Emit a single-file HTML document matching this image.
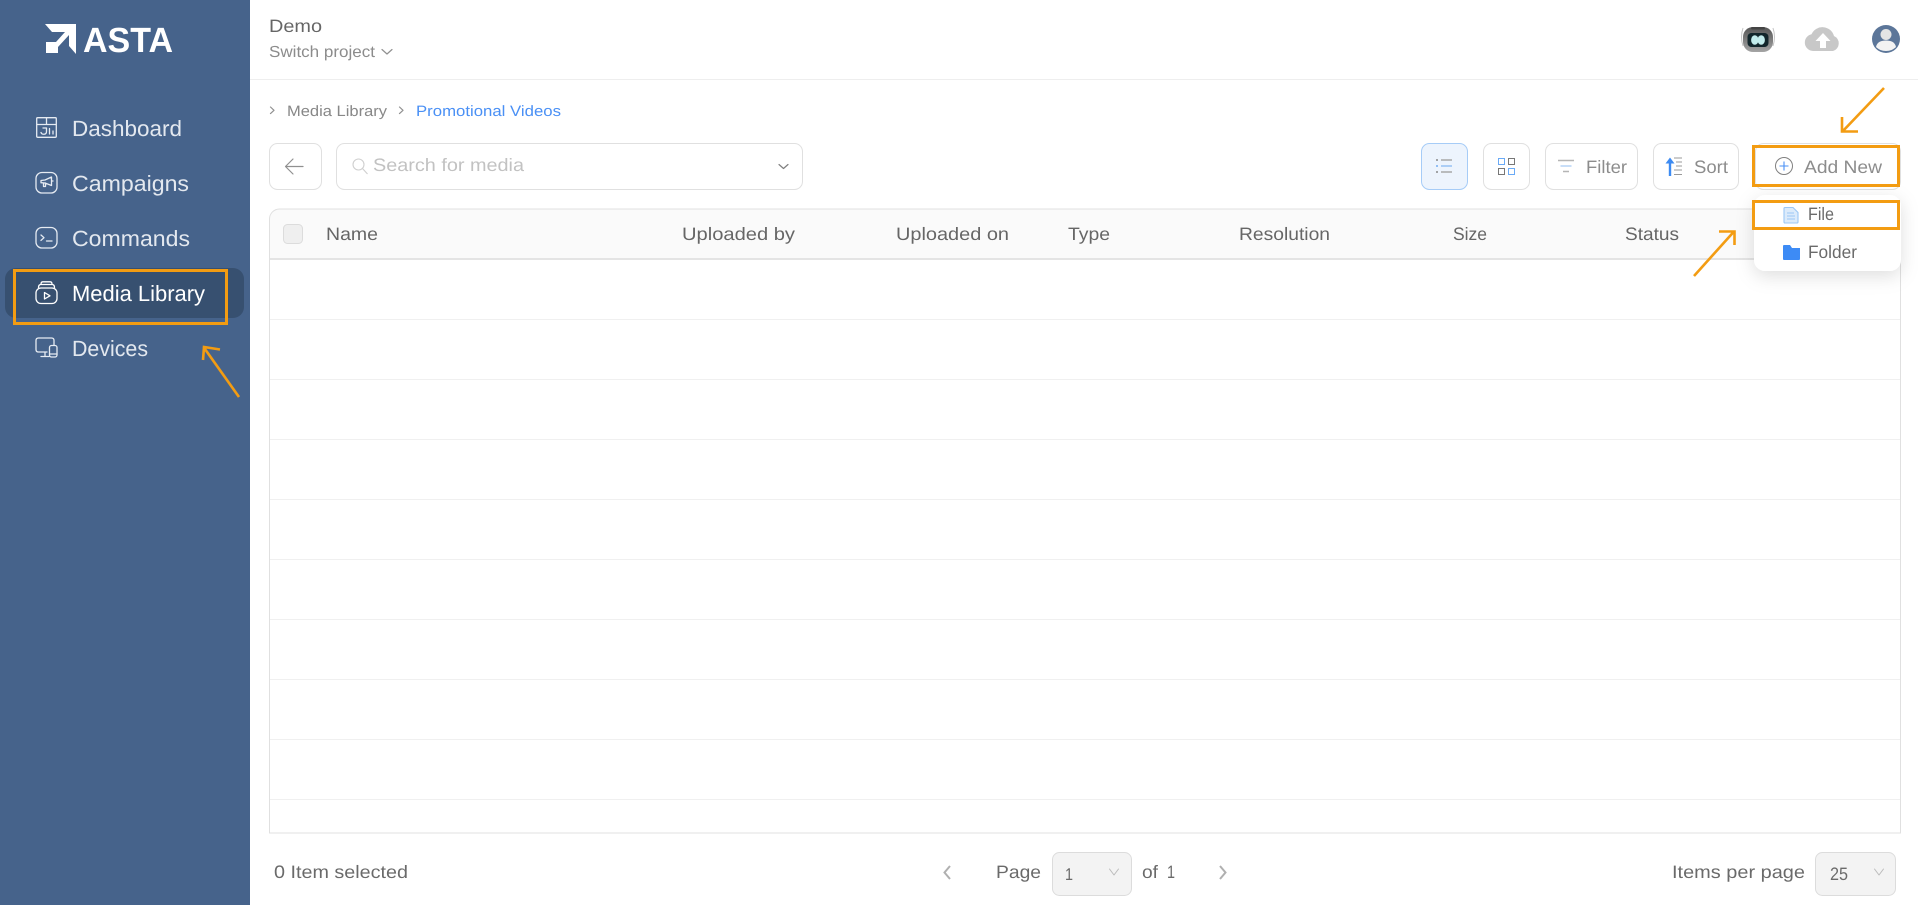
<!DOCTYPE html>
<html lang="en">
<head>
<meta charset="utf-8">
<title>ASTA - Media Library</title>
<style>
html,body{margin:0;padding:0;background:#fff;width:1918px;height:905px;overflow:hidden}
svg{display:block}
text{font-family:"Liberation Sans",sans-serif;text-rendering:geometricPrecision}
.n{font-size:22px;fill:#e3e8ef}
.h{font-size:18px;fill:#666}
.b{font-size:18px;fill:#8c8c8c}
.f{font-size:18px;fill:#6a6a6a}
.ic{fill:none;stroke:#e6ebf2;stroke-width:1.3;stroke-linecap:round;stroke-linejoin:round}
.o{fill:none;stroke:#f39c12;stroke-width:3}
.a{fill:none;stroke:#f39c12;stroke-width:2.6;stroke-linecap:butt;stroke-linejoin:miter}
.btn{fill:#fff;stroke:#e0e0e0;stroke-width:1}
.g{fill:none;stroke:#909090;stroke-width:1.2;stroke-linecap:round;stroke-linejoin:round}
</style>
</head>
<body>
<svg xmlns="http://www.w3.org/2000/svg" width="1918" height="905" viewBox="0 0 1918 905">
<defs>
<filter id="sh" x="-30%" y="-30%" width="160%" height="170%"><feDropShadow dx="0" dy="5" stdDeviation="9" flood-color="#000" flood-opacity=".13"/></filter>
<linearGradient id="rb" x1="0" y1="0" x2="0" y2="1"><stop offset="0" stop-color="#555"/><stop offset="1" stop-color="#a5a5a5"/></linearGradient>
</defs>
<rect width="1918" height="905" fill="#fff"/>
<!-- sidebar -->
<rect width="250" height="905" fill="#46638b"/>
<path fill="#fff" d="M45 24H76V54L69 46V35L58 47V53H46V42H56L65 32H52Z"/>
<text x="83" y="52" font-size="35" font-weight="700" fill="#fff" textLength="90" lengthAdjust="spacingAndGlyphs">ASTA</text>

<rect x="5" y="268" width="239" height="50" rx="11" fill="#375070"/>

<text class="n" x="72" y="136" textLength="110" lengthAdjust="spacingAndGlyphs">Dashboard</text>
<text class="n" x="72" y="191" textLength="117" lengthAdjust="spacingAndGlyphs">Campaigns</text>
<text class="n" x="72" y="246" textLength="118" lengthAdjust="spacingAndGlyphs">Commands</text>
<text class="n" x="72" y="301" textLength="133" lengthAdjust="spacingAndGlyphs" style="fill:#fff">Media Library</text>
<text class="n" x="72" y="356" textLength="76" lengthAdjust="spacingAndGlyphs">Devices</text>

<!-- dashboard icon -->
<g class="ic">
<rect x="36.700" y="117.700" width="19.600" height="19.600" rx="1"/>
<path d="M37 124.500H56M46.500 118V124.500M41 132.500c1 2.500 5.500 2.500 5.500-1V128M43 128h3.500M49.500 128.500V134M53 131V134"/>
</g>
<!-- campaigns icon -->
<g class="ic">
<rect x="36" y="172.500" width="21" height="20.500" rx="6"/>
<path d="M41 180.500l4-.5 6.500-3v8.500l-6.500-2.500-4-.3zM43.500 183v3.500h2V183M51.500 181h1.500"/>
</g>
<!-- commands icon -->
<g class="ic">
<rect x="36" y="227.500" width="21" height="20.500" rx="6"/>
<path d="M41 235l3 2.700-3 2.700M46.500 241h5.500"/>
</g>
<!-- media icon -->
<g class="ic" style="stroke:#fff">
<rect x="36" y="288" width="21" height="15.500" rx="5"/>
<path d="M38.500 287.500c0-2 .8-3 2.500-3h11c1.700 0 2.500 1 2.500 3M41 284c0-1.500.8-2.200 2-2.200h7c1.200 0 2 .7 2 2.200M44.500 292.500v6.500l5.500-3.200z"/>
</g>
<!-- devices icon -->
<g class="ic">
<path d="M47 352H38.500Q36 352 36 349.500V340.500Q36 338 38.500 338H51.500Q54 338 54 340.500V345M45 352V356.500M41 356.500H49"/>
<rect x="49.500" y="345.500" width="7.500" height="11.500" rx="2"/>
<path d="M49.500 354H57"/>
</g>

<!-- header -->
<rect x="250" y="79" width="1668" height="1" fill="#eeeeee"/>
<text x="269" y="32" font-size="18" fill="#666" textLength="53" lengthAdjust="spacingAndGlyphs">Demo</text>
<text x="269" y="57" font-size="16" fill="#8c8c8c" textLength="106" lengthAdjust="spacingAndGlyphs">Switch project</text>
<path class="g" d="M382 49.500l5 4.500 5-4.500"/>

<!-- robot -->
<path d="M1743 28c-2 6-2 12 0 18M1773 28c2 6 2 12 0 18" stroke="#c4c4c4" stroke-width="1" fill="none"/>
<rect x="1743" y="27" width="30" height="25" rx="10" fill="url(#rb)"/>
<rect x="1751" y="27" width="14" height="2.500" rx="1.200" fill="#444"/>
<rect x="1747.500" y="33" width="21" height="14" rx="4" fill="#12262b"/>
<ellipse cx="1754.800" cy="40" rx="3.700" ry="4.800" fill="#c2ecec"/>
<ellipse cx="1761.200" cy="40" rx="3.700" ry="4.800" fill="#c2ecec"/>
<!-- cloud -->
<path fill="#c8c8c8" d="M1813 51a8.500 8.500 0 0 1-1.500-16.800A12 12 0 0 1 1834 36a8 8 0 0 1-1 15z"/>
<path fill="#fff" d="M1823 33l-7.500 8h4.500v7h6v-7h4.500z"/>
<!-- avatar -->
<circle cx="1886" cy="39" r="14" fill="#5c7699"/>
<circle cx="1886" cy="34.500" r="5.500" fill="#e4e4e4"/>
<path fill="#f3f3f3" d="M1876 47c1-5 5-6.500 10-6.500s9 1.500 10 6.500c-2.500 2.500-6 4-10 4s-7.500-1.500-10-4z"/>

<!-- breadcrumb -->
<path class="g" d="M270.500 107l3.500 3.300-3.500 3.300M399.500 107l3.500 3.300-3.500 3.300"/>
<text x="287" y="116" font-size="15" fill="#888" textLength="100" lengthAdjust="spacingAndGlyphs">Media Library</text>
<text x="416" y="116" font-size="15" fill="#4a90f5" textLength="145" lengthAdjust="spacingAndGlyphs">Promotional Videos</text>

<!-- toolbar -->
<rect class="btn" x="269.500" y="143.500" width="52" height="46" rx="8"/>
<path class="g" d="M286 166.500H303M293 159l-7.500 7.500 7.500 7.500"/>
<rect class="btn" x="336.500" y="143.500" width="466" height="46" rx="8"/>
<circle cx="358.500" cy="164.500" r="5.500" fill="none" stroke="#cfcfcf" stroke-width="1.100"/>
<path d="M362.500 168.500l5 5.500" stroke="#cfcfcf" stroke-width="1.100"/>
<text x="373" y="171" font-size="18" fill="#c2c2c2" textLength="151" lengthAdjust="spacingAndGlyphs">Search for media</text>
<path class="g" d="M779 164.500l4.500 4 4.500-4" style="stroke:#808080"/>

<rect x="1421.500" y="143.500" width="46" height="46" rx="8" fill="#edf4fd" stroke="#a6ccf7" stroke-width="1"/>
<g stroke-width="1.600">
<path d="M1436 160h2M1436 172h2" stroke="#888"/><path d="M1436 166h2" stroke="#7ab0f2"/>
<path d="M1441 160h11M1441 172h11" stroke="#a8a8a8"/><path d="M1441 166h11" stroke="#9cc5f5"/>
</g>
<rect class="btn" x="1483.500" y="143.500" width="46" height="46" rx="8"/>
<g fill="none" stroke-width="1">
<rect x="1498.500" y="158.500" width="6" height="6" stroke="#6aaaf6"/>
<rect x="1508.500" y="158.500" width="6" height="6" stroke="#777"/>
<rect x="1498.500" y="168.500" width="6" height="6" stroke="#777"/>
<rect x="1508.500" y="168.500" width="6" height="6" stroke="#6aaaf6"/>
</g>
<rect class="btn" x="1545.500" y="143.500" width="92" height="46" rx="8"/>
<g stroke-width="1.500">
<path d="M1558 160.500h16" stroke="#b5b5b5"/>
<path d="M1560.500 166h11" stroke="#b5d3f5"/>
<path d="M1563 171.500h6" stroke="#b5b5b5"/>
</g>
<text class="b" x="1586" y="173" textLength="41" lengthAdjust="spacingAndGlyphs">Filter</text>
<rect class="btn" x="1653.500" y="143.500" width="85" height="46" rx="8"/>
<path fill="#3d8bf2" d="M1670 157.500l-4.500 6h3.300V176h2.400V163.500h3.300z"/>
<path d="M1674 158h8M1676 162h6M1676 166h6M1674 170h8M1674 174.500h8" stroke="#999" stroke-width="1"/>
<text class="b" x="1694" y="173" textLength="34" lengthAdjust="spacingAndGlyphs">Sort</text>
<rect class="btn" x="1755.500" y="143.500" width="145" height="46" rx="8"/>
<circle cx="1784" cy="166" r="8.500" fill="none" stroke="#808080" stroke-width="1"/>
<path d="M1784 161.500v9M1779.500 166h9" stroke="#4a90f5" stroke-width="1.100"/>
<text class="b" x="1804" y="173" textLength="78" lengthAdjust="spacingAndGlyphs">Add New</text>

<!-- table -->
<path d="M269.500 259V219a10 10 0 0 1 10-10H1891a10 10 0 0 1 10 10V259Z" fill="#fafafa"/>
<path d="M269.500 833V219a10 10 0 0 1 10-10H1890.500a10 10 0 0 1 10 10V833Z" fill="none" stroke="#e0e0e0" stroke-width="1"/>
<rect x="270" y="258" width="1630" height="2" fill="#e4e4e4"/>
<g fill="#f0f0f0">
<rect x="270" y="319" width="1630" height="1"/>
<rect x="270" y="379" width="1630" height="1"/>
<rect x="270" y="439" width="1630" height="1"/>
<rect x="270" y="499" width="1630" height="1"/>
<rect x="270" y="559" width="1630" height="1"/>
<rect x="270" y="619" width="1630" height="1"/>
<rect x="270" y="679" width="1630" height="1"/>
<rect x="270" y="739" width="1630" height="1"/>
<rect x="270" y="799" width="1630" height="1"/>
</g>
<rect x="283.500" y="224.500" width="19" height="19" rx="4" fill="#efefef" stroke="#dcdcdc"/>
<text class="h" x="326" y="240" textLength="52" lengthAdjust="spacingAndGlyphs">Name</text>
<text class="h" x="682" y="240" textLength="113" lengthAdjust="spacingAndGlyphs">Uploaded by</text>
<text class="h" x="896" y="240" textLength="113" lengthAdjust="spacingAndGlyphs">Uploaded on</text>
<text class="h" x="1068" y="240" textLength="42" lengthAdjust="spacingAndGlyphs">Type</text>
<text class="h" x="1239" y="240" textLength="91" lengthAdjust="spacingAndGlyphs">Resolution</text>
<text class="h" x="1453" y="240" textLength="34" lengthAdjust="spacingAndGlyphs">Size</text>
<text class="h" x="1625" y="240" textLength="54" lengthAdjust="spacingAndGlyphs">Status</text>

<!-- dropdown -->
<rect x="1754" y="195" width="147" height="76" rx="11" fill="#fff" filter="url(#sh)"/>
<path d="M1785 207.500h8l5 5v9.500a1 1 0 0 1-1 1h-12a1 1 0 0 1-1-1v-13.500a1 1 0 0 1 1-1z" fill="#dcebfb" stroke="#9cc7f5" stroke-width="1.100"/>
<path d="M1787 213h7M1787 216h8M1787 219h8" stroke="#9cc7f5" stroke-width="1.100"/>
<text class="f" x="1808" y="220" textLength="26" lengthAdjust="spacingAndGlyphs">File</text>
<path fill="#3d8bf5" d="M1783 246a1 1 0 0 1 1-1h6l2 3h8v11a1 1 0 0 1-1 1h-15a1 1 0 0 1-1-1z"/>
<text class="f" x="1808" y="258" textLength="49" lengthAdjust="spacingAndGlyphs">Folder</text>

<!-- footer -->
<text class="f" x="274" y="878" textLength="134" lengthAdjust="spacingAndGlyphs">0 Item selected</text>
<path d="M950 866l-5.500 6.500 5.500 6.500M1220 866l5.500 6.500-5.500 6.500" fill="none" stroke="#b0b0b0" stroke-width="2"/>
<text class="f" x="996" y="878" textLength="45" lengthAdjust="spacingAndGlyphs">Page</text>
<rect x="1052.500" y="852.500" width="79" height="43" rx="7" fill="#f3f3f3" stroke="#dcdcdc"/>
<text class="f" x="1065" y="880" style="font-size:17px" textLength="8" lengthAdjust="spacingAndGlyphs">1</text>
<path class="g" d="M1109.500 869l4.500 6 4.500-6" style="stroke:#bbb;stroke-width:1"/>
<text class="f" x="1142" y="878" textLength="16" lengthAdjust="spacingAndGlyphs">of</text>
<text class="f" x="1167" y="878" textLength="8" lengthAdjust="spacingAndGlyphs">1</text>
<text class="f" x="1672" y="878" textLength="133" lengthAdjust="spacingAndGlyphs">Items per page</text>
<rect x="1815.500" y="852.500" width="80" height="43" rx="7" fill="#f3f3f3" stroke="#dcdcdc"/>
<text class="f" x="1830" y="880" textLength="18" lengthAdjust="spacingAndGlyphs">25</text>
<path class="g" d="M1874.500 869l4.500 6 4.500-6" style="stroke:#bbb;stroke-width:1"/>

<!-- orange annotations -->
<rect class="o" x="14.500" y="270.500" width="212" height="53"/>
<rect class="o" x="1753.500" y="146.500" width="145" height="39"/>
<rect class="o" x="1753.500" y="201.500" width="145" height="27"/>
<path class="a" d="M239 397L203.500 347M203 360L204 347L220 349.500"/>
<path class="a" d="M1884 88L1842 132M1842 117V131.500H1858"/>
<path class="a" d="M1694 276L1734 231.500M1719 231.500H1734.500V245"/>
</svg>
</body>
</html>
